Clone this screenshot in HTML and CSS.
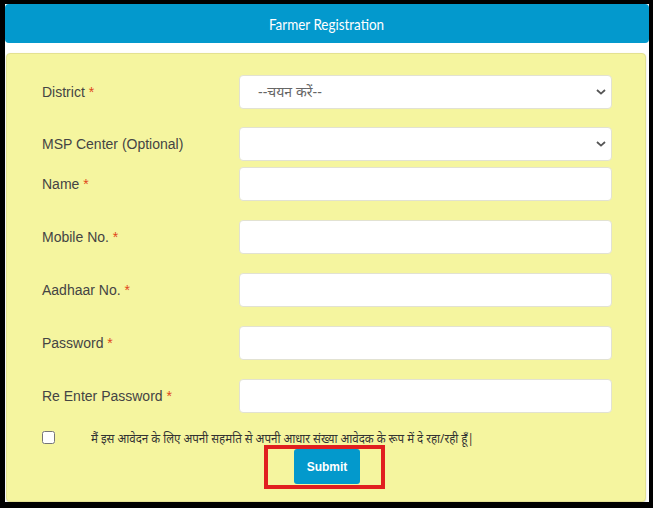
FILE: index.html
```html
<!DOCTYPE html>
<html lang="hi">
<head>
    <meta charset="UTF-8">
    <title>Farmer Registration</title>
    <link rel="stylesheet" href="styles.css">
</head>
<body>
<div class="card">
    <div class="card-head"><span class="head-text">Farmer Registration</span></div>

    <form class="panel">
        <div class="row">
            <label>District <span class="req">*</span></label>
            <select class="field">
                <option>--चयन करें--</option>
            </select>
        </div>
        <div class="row tight">
            <label>MSP Center (Optional)</label>
            <select class="field">
                <option></option>
            </select>
        </div>
        <div class="row">
            <label>Name <span class="req">*</span></label>
            <input class="field" type="text">
        </div>
        <div class="row">
            <label>Mobile No. <span class="req">*</span></label>
            <input class="field" type="text">
        </div>
        <div class="row">
            <label>Aadhaar No. <span class="req">*</span></label>
            <input class="field" type="text">
        </div>
        <div class="row">
            <label>Password <span class="req">*</span></label>
            <input class="field" type="password">
        </div>
        <div class="row">
            <label>Re Enter Password <span class="req">*</span></label>
            <input class="field" type="password">
        </div>

        <div class="consent">
            <input type="checkbox" class="check">
            <span class="consent-text">मैं इस आवेदन के लिए अपनी सहमति से अपनी आधार संख्या आवेदक के रूप में दे रहा/रही हूँ|</span>
        </div>

        <div class="actions">
            <span class="btn-wrap">
                <button type="button" class="submit">Submit</button>
                <span class="mark"></span>
            </span>
        </div>
    </form>
</div>
</body>
</html>
```

FILE: styles.css
```css
*{
    margin: 0px;
    padding: 0px;
    box-sizing: border-box;
}
html, body{
    width: 100%;
    height: 100%;
}
body{
    background-color: #000;
    font-family: "Liberation Sans", Arial, sans-serif;
    font-size: 14px;
    color: #444;
    overflow: hidden;
}
.card{
    margin: 4px 4px 0 5px;
    background-color: #fff;
    height: 498px;
}
.card-head{
    height: 39px;
    line-height: 40px;
    background-color: #0399cd;
    border-radius: 4px;
    color: #fff;
    text-align: center;
    font-family: "Lato", sans-serif;
    font-size: 16px;
}
.head-text{
    display: inline-block;
    transform: scaleX(0.84);
}

/*form*/
.panel{
    margin: 10px 3px 0 1px;
    height: 449px;
    padding: 21px 33px 0 35px;
    background-color: #f5f59f;
    border: 1px solid #e4e192;
    border-radius: 4px;
    box-shadow: 0 1px 2px rgba(0,0,0,0.15);
}
.row{
    display: grid;
    grid-template-columns: 197px 1fr;
    align-items: center;
    margin-bottom: 19px;
}
.row:first-child{
    margin-bottom: 18px;
}
.row.tight{
    margin-bottom: 6px;
}
.req{
    color: #e0461a;
}
.field{
    height: 34px;
    width: 100%;
    padding: 0 18px;
    background-color: #fff;
    border: 1px solid #e2e2d2;
    border-radius: 4px;
    font-family: "Liberation Sans", "Noto Sans", sans-serif;
    font-size: 14px;
    color: #666;
    outline: none;
}
select.field{
    -webkit-appearance: none;
    appearance: none;
    background-image: url("data:image/svg+xml,%3Csvg xmlns='http://www.w3.org/2000/svg' width='10' height='6' viewBox='0 0 10 6'%3E%3Cpath d='M1 1l4 3.6L9 1' fill='none' stroke='%23555' stroke-width='1.8'/%3E%3C/svg%3E");
    background-repeat: no-repeat;
    background-position: right 5px center;
}
.consent{
    display: flex;
    align-items: center;
    height: 13px;
    margin-top: -1px;
}
.check{
    width: 13px;
    height: 13px;
    margin: 0;
    flex: none;
}
.consent-text{
    display: inline-block;
    margin-left: 36px;
    font-family: "Noto Sans", "Liberation Sans", sans-serif;
    font-size: 13px;
    color: #333;
    white-space: nowrap;
    transform: scaleX(0.89);
    transform-origin: left center;
}
.actions{
    text-align: center;
    margin-top: 5px;
}
.btn-wrap{
    display: inline-block;
    position: relative;
}
.submit{
    display: block;
    width: 66px;
    height: 35px;
    border: none;
    border-radius: 3px;
    background-color: #0399cc;
    color: #fff;
    font-family: "Liberation Sans", sans-serif;
    font-size: 12px;
    font-weight: bold;
}
/*annotation box*/
.mark{
    position: absolute;
    left: -30px;
    top: -4px;
    width: 121px;
    height: 44px;
    border: 4px solid #e11f1f;
}
```
